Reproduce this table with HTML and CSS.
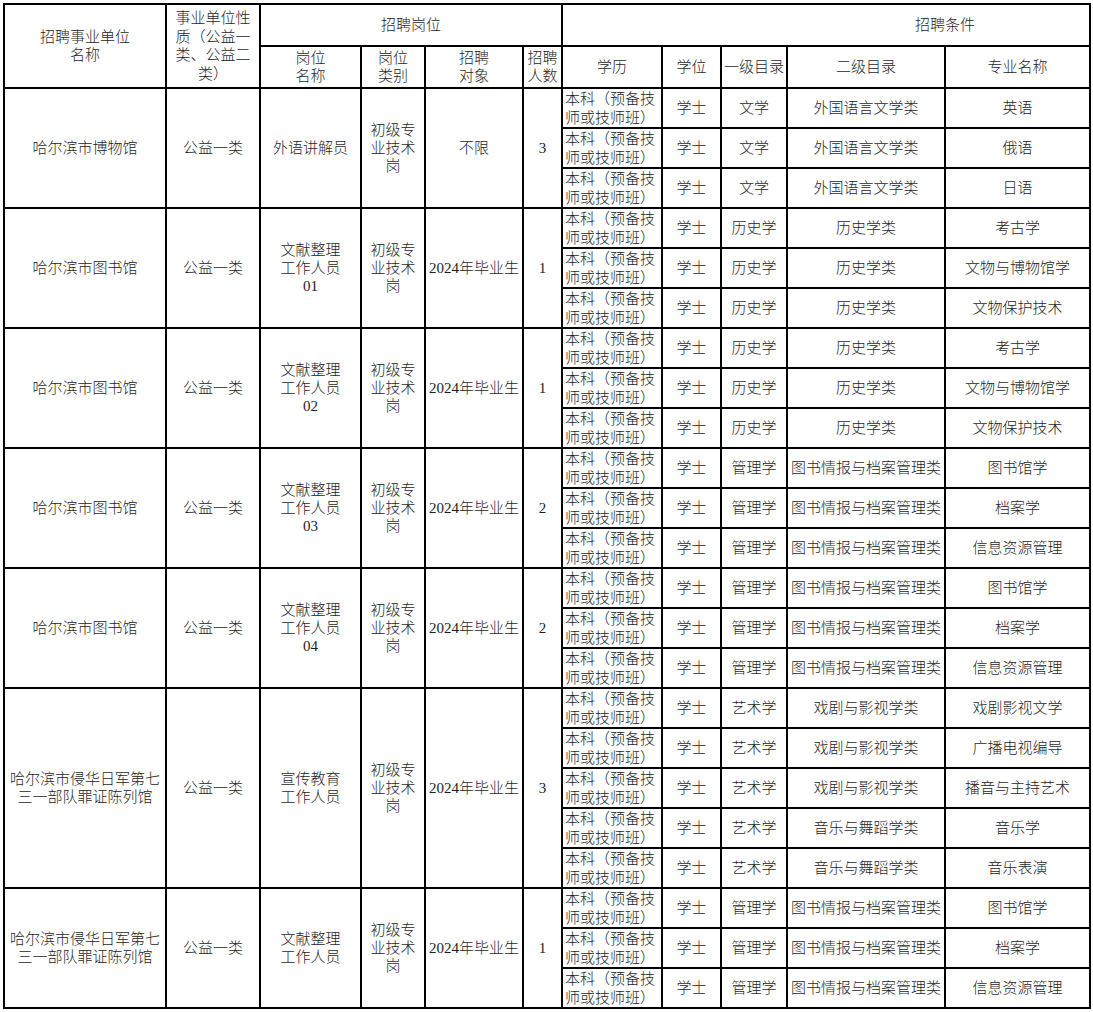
FILE: index.html
```html
<!DOCTYPE html>
<html lang="zh-CN">
<head>
<meta charset="utf-8">
<title>招聘岗位表</title>
<link rel="stylesheet" href="styles.css">
</head>
<body>
<div class="sheet">
  <div class="cell r2"><span>招聘事业单位<br>名称</span></div>
  <div class="cell r2"><span>事业单位性<br>质<span class="p">（</span>公益一<br>类、公益二<br>类<span class="p">）</span></span></div>
  <div class="cell c4"><span>招聘岗位</span></div>
  <div class="cell c5 cond"><span>招聘条件</span></div>
  <div class="cell"><span>岗位<br>名称</span></div>
  <div class="cell"><span>岗位<br>类别</span></div>
  <div class="cell"><span>招聘<br>对象</span></div>
  <div class="cell"><span>招聘<br>人数</span></div>
  <div class="cell"><span>学历</span></div>
  <div class="cell"><span>学位</span></div>
  <div class="cell"><span>一级目录</span></div>
  <div class="cell"><span>二级目录</span></div>
  <div class="cell"><span>专业名称</span></div>

  <!-- group 1 -->
  <div class="cell r3"><span>哈尔滨市博物馆</span></div>
  <div class="cell r3"><span>公益一类</span></div>
  <div class="cell r3"><span>外语讲解员</span></div>
  <div class="cell r3"><span>初级专<br>业技术<br>岗</span></div>
  <div class="cell r3"><span>不限</span></div>
  <div class="cell r3"><span>3</span></div>
  <div class="cell edu"><span>本科<span class="p">（</span>预备技<br>师或技师班<span class="p">）</span></span></div><div class="cell"><span>学士</span></div><div class="cell"><span>文学</span></div><div class="cell"><span>外国语言文学类</span></div><div class="cell"><span>英语</span></div>
  <div class="cell edu"><span>本科<span class="p">（</span>预备技<br>师或技师班<span class="p">）</span></span></div><div class="cell"><span>学士</span></div><div class="cell"><span>文学</span></div><div class="cell"><span>外国语言文学类</span></div><div class="cell"><span>俄语</span></div>
  <div class="cell edu"><span>本科<span class="p">（</span>预备技<br>师或技师班<span class="p">）</span></span></div><div class="cell"><span>学士</span></div><div class="cell"><span>文学</span></div><div class="cell"><span>外国语言文学类</span></div><div class="cell"><span>日语</span></div>

  <!-- group 2 -->
  <div class="cell r3"><span>哈尔滨市图书馆</span></div>
  <div class="cell r3"><span>公益一类</span></div>
  <div class="cell r3"><span>文献整理<br>工作人员<br>01</span></div>
  <div class="cell r3"><span>初级专<br>业技术<br>岗</span></div>
  <div class="cell r3"><span>2024年毕业生</span></div>
  <div class="cell r3"><span>1</span></div>
  <div class="cell edu"><span>本科<span class="p">（</span>预备技<br>师或技师班<span class="p">）</span></span></div><div class="cell"><span>学士</span></div><div class="cell"><span>历史学</span></div><div class="cell"><span>历史学类</span></div><div class="cell"><span>考古学</span></div>
  <div class="cell edu"><span>本科<span class="p">（</span>预备技<br>师或技师班<span class="p">）</span></span></div><div class="cell"><span>学士</span></div><div class="cell"><span>历史学</span></div><div class="cell"><span>历史学类</span></div><div class="cell"><span>文物与博物馆学</span></div>
  <div class="cell edu"><span>本科<span class="p">（</span>预备技<br>师或技师班<span class="p">）</span></span></div><div class="cell"><span>学士</span></div><div class="cell"><span>历史学</span></div><div class="cell"><span>历史学类</span></div><div class="cell"><span>文物保护技术</span></div>

  <!-- group 3 -->
  <div class="cell r3"><span>哈尔滨市图书馆</span></div>
  <div class="cell r3"><span>公益一类</span></div>
  <div class="cell r3"><span>文献整理<br>工作人员<br>02</span></div>
  <div class="cell r3"><span>初级专<br>业技术<br>岗</span></div>
  <div class="cell r3"><span>2024年毕业生</span></div>
  <div class="cell r3"><span>1</span></div>
  <div class="cell edu"><span>本科<span class="p">（</span>预备技<br>师或技师班<span class="p">）</span></span></div><div class="cell"><span>学士</span></div><div class="cell"><span>历史学</span></div><div class="cell"><span>历史学类</span></div><div class="cell"><span>考古学</span></div>
  <div class="cell edu"><span>本科<span class="p">（</span>预备技<br>师或技师班<span class="p">）</span></span></div><div class="cell"><span>学士</span></div><div class="cell"><span>历史学</span></div><div class="cell"><span>历史学类</span></div><div class="cell"><span>文物与博物馆学</span></div>
  <div class="cell edu"><span>本科<span class="p">（</span>预备技<br>师或技师班<span class="p">）</span></span></div><div class="cell"><span>学士</span></div><div class="cell"><span>历史学</span></div><div class="cell"><span>历史学类</span></div><div class="cell"><span>文物保护技术</span></div>

  <!-- group 4 -->
  <div class="cell r3"><span>哈尔滨市图书馆</span></div>
  <div class="cell r3"><span>公益一类</span></div>
  <div class="cell r3"><span>文献整理<br>工作人员<br>03</span></div>
  <div class="cell r3"><span>初级专<br>业技术<br>岗</span></div>
  <div class="cell r3"><span>2024年毕业生</span></div>
  <div class="cell r3"><span>2</span></div>
  <div class="cell edu"><span>本科<span class="p">（</span>预备技<br>师或技师班<span class="p">）</span></span></div><div class="cell"><span>学士</span></div><div class="cell"><span>管理学</span></div><div class="cell"><span>图书情报与档案管理类</span></div><div class="cell"><span>图书馆学</span></div>
  <div class="cell edu"><span>本科<span class="p">（</span>预备技<br>师或技师班<span class="p">）</span></span></div><div class="cell"><span>学士</span></div><div class="cell"><span>管理学</span></div><div class="cell"><span>图书情报与档案管理类</span></div><div class="cell"><span>档案学</span></div>
  <div class="cell edu"><span>本科<span class="p">（</span>预备技<br>师或技师班<span class="p">）</span></span></div><div class="cell"><span>学士</span></div><div class="cell"><span>管理学</span></div><div class="cell"><span>图书情报与档案管理类</span></div><div class="cell"><span>信息资源管理</span></div>

  <!-- group 5 -->
  <div class="cell r3"><span>哈尔滨市图书馆</span></div>
  <div class="cell r3"><span>公益一类</span></div>
  <div class="cell r3"><span>文献整理<br>工作人员<br>04</span></div>
  <div class="cell r3"><span>初级专<br>业技术<br>岗</span></div>
  <div class="cell r3"><span>2024年毕业生</span></div>
  <div class="cell r3"><span>2</span></div>
  <div class="cell edu"><span>本科<span class="p">（</span>预备技<br>师或技师班<span class="p">）</span></span></div><div class="cell"><span>学士</span></div><div class="cell"><span>管理学</span></div><div class="cell"><span>图书情报与档案管理类</span></div><div class="cell"><span>图书馆学</span></div>
  <div class="cell edu"><span>本科<span class="p">（</span>预备技<br>师或技师班<span class="p">）</span></span></div><div class="cell"><span>学士</span></div><div class="cell"><span>管理学</span></div><div class="cell"><span>图书情报与档案管理类</span></div><div class="cell"><span>档案学</span></div>
  <div class="cell edu"><span>本科<span class="p">（</span>预备技<br>师或技师班<span class="p">）</span></span></div><div class="cell"><span>学士</span></div><div class="cell"><span>管理学</span></div><div class="cell"><span>图书情报与档案管理类</span></div><div class="cell"><span>信息资源管理</span></div>

  <!-- group 6 -->
  <div class="cell r5"><span>哈尔滨市侵华日军第七<br>三一部队罪证陈列馆</span></div>
  <div class="cell r5"><span>公益一类</span></div>
  <div class="cell r5"><span>宣传教育<br>工作人员</span></div>
  <div class="cell r5"><span>初级专<br>业技术<br>岗</span></div>
  <div class="cell r5"><span>2024年毕业生</span></div>
  <div class="cell r5"><span>3</span></div>
  <div class="cell edu"><span>本科<span class="p">（</span>预备技<br>师或技师班<span class="p">）</span></span></div><div class="cell"><span>学士</span></div><div class="cell"><span>艺术学</span></div><div class="cell"><span>戏剧与影视学类</span></div><div class="cell"><span>戏剧影视文学</span></div>
  <div class="cell edu"><span>本科<span class="p">（</span>预备技<br>师或技师班<span class="p">）</span></span></div><div class="cell"><span>学士</span></div><div class="cell"><span>艺术学</span></div><div class="cell"><span>戏剧与影视学类</span></div><div class="cell"><span>广播电视编导</span></div>
  <div class="cell edu"><span>本科<span class="p">（</span>预备技<br>师或技师班<span class="p">）</span></span></div><div class="cell"><span>学士</span></div><div class="cell"><span>艺术学</span></div><div class="cell"><span>戏剧与影视学类</span></div><div class="cell"><span>播音与主持艺术</span></div>
  <div class="cell edu"><span>本科<span class="p">（</span>预备技<br>师或技师班<span class="p">）</span></span></div><div class="cell"><span>学士</span></div><div class="cell"><span>艺术学</span></div><div class="cell"><span>音乐与舞蹈学类</span></div><div class="cell"><span>音乐学</span></div>
  <div class="cell edu"><span>本科<span class="p">（</span>预备技<br>师或技师班<span class="p">）</span></span></div><div class="cell"><span>学士</span></div><div class="cell"><span>艺术学</span></div><div class="cell"><span>音乐与舞蹈学类</span></div><div class="cell"><span>音乐表演</span></div>

  <!-- group 7 -->
  <div class="cell r3"><span>哈尔滨市侵华日军第七<br>三一部队罪证陈列馆</span></div>
  <div class="cell r3"><span>公益一类</span></div>
  <div class="cell r3"><span>文献整理<br>工作人员</span></div>
  <div class="cell r3"><span>初级专<br>业技术<br>岗</span></div>
  <div class="cell r3"><span>2024年毕业生</span></div>
  <div class="cell r3"><span>1</span></div>
  <div class="cell edu"><span>本科<span class="p">（</span>预备技<br>师或技师班<span class="p">）</span></span></div><div class="cell"><span>学士</span></div><div class="cell"><span>管理学</span></div><div class="cell"><span>图书情报与档案管理类</span></div><div class="cell"><span>图书馆学</span></div>
  <div class="cell edu"><span>本科<span class="p">（</span>预备技<br>师或技师班<span class="p">）</span></span></div><div class="cell"><span>学士</span></div><div class="cell"><span>管理学</span></div><div class="cell"><span>图书情报与档案管理类</span></div><div class="cell"><span>档案学</span></div>
  <div class="cell edu"><span>本科<span class="p">（</span>预备技<br>师或技师班<span class="p">）</span></span></div><div class="cell"><span>学士</span></div><div class="cell"><span>管理学</span></div><div class="cell"><span>图书情报与档案管理类</span></div><div class="cell"><span>信息资源管理</span></div>
</div>
</body>
</html>
```

FILE: styles.css
```css
html, body {
  margin: 0;
  padding: 0;
  background: #ffffff;
}

body {
  padding: 3px 0 0 3px;
  font-family: "Liberation Serif", "Noto Sans CJK SC", serif;
  font-size: 15px;
  font-weight: 300;
  color: #1e1e1e;
}

.sheet {
  display: grid;
  width: max-content;
  grid-template-columns: 160px 92px 99px 62px 96px 37px 98px 57px 64px 156px 143px;
  grid-template-rows: 40px 40px repeat(23, 38px);
  gap: 2px;
  padding: 2px;
  background: #000000;
}

.cell {
  background: #ffffff;
  display: flex;
  align-items: center;
  justify-content: center;
  text-align: center;
  line-height: 18px;
  white-space: nowrap;
}

.p {
  font-family: "Noto Sans CJK TC", "Noto Sans CJK SC", sans-serif;
}

.r2 { grid-row: span 2; }
.r3 { grid-row: span 3; }
.r5 { grid-row: span 5; }
.c4 { grid-column: span 4; }
.c5 { grid-column: span 5; }

.cond {
  justify-content: flex-start;
  padding-left: 352px;
}

.edu {
  justify-content: flex-start;
  text-align: left;
  padding-left: 2px;
}
```
